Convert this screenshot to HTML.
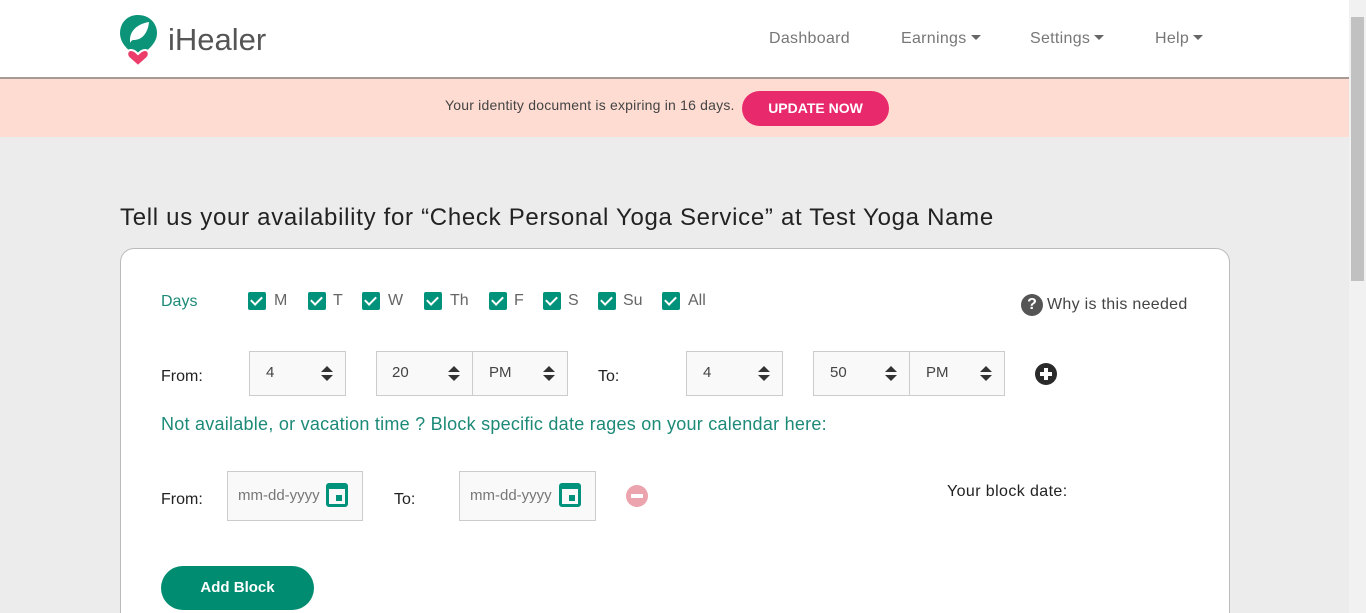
<!DOCTYPE html>
<html style="width:1366px;height:613px;overflow:hidden"><head><meta charset="utf-8"><style>
*{box-sizing:border-box;margin:0;padding:0}
body{width:1366px;height:613px;overflow:hidden;position:relative;font-family:"Liberation Sans",sans-serif;background:#ececec;color:#333}
.a{position:absolute}
.hdr{left:0;top:0;width:1349px;height:79px;background:#fff;border-bottom:2px solid #a59a96;box-shadow:0 1px 2px rgba(0,0,0,.2)}
.nav{top:30px;font-size:16px;color:#777;letter-spacing:.3px}
.tri{display:inline-block;width:0;height:0;border-left:5px solid transparent;border-right:5px solid transparent;border-top:5px solid #666;vertical-align:3px;margin-left:4px}
.ban{left:0;top:79px;width:1349px;height:58px;background:#fedcd2}
.btn{left:742px;top:91px;width:147px;height:35px;border-radius:18px;background:#e8296b;color:#fff;font-weight:bold;font-size:14px;text-align:center;line-height:35px}
.card{left:120px;top:248px;width:1110px;height:365px;background:#fff;border:1px solid #bbb;border-bottom:none;border-radius:14px 14px 0 0}
.cb{top:292px;width:18px;height:18px;background:#00927a;border-radius:2px}
.cb:after{content:"";position:absolute;left:5px;top:2px;width:5px;height:9px;border:solid #fff;border-width:0 2px 2px 0;transform:rotate(45deg)}
.dl{top:292px;font-size:16px;color:#666}
.sel{top:351px;height:45px;background:#f9f9f9;border:1px solid #ccc;font-size:15px;color:#444;padding:12px 0 0 16px}
.sp{position:absolute;right:12px;top:14px;width:12px;height:16px}
.sp:before{content:"";position:absolute;left:0;top:0;border-left:6px solid transparent;border-right:6px solid transparent;border-bottom:6px solid #333}
.sp:after{content:"";position:absolute;left:0;top:9px;border-left:6px solid transparent;border-right:6px solid transparent;border-top:6px solid #333}
.lb{font-size:16px;color:#222}
.dt{top:471px;height:50px;background:#f9f9f9;border:1px solid #ccc;font-size:15px;color:#777;padding:15px 0 0 10px}
.cal{position:absolute;top:11px;width:22px;height:24px;border:3px solid #00927a;border-top-width:6px;border-radius:3px}
.cal:before{content:"";position:absolute;right:3px;bottom:3px;width:6px;height:6px;background:#00927a}
</style></head><body>
<div class="a hdr"></div>
<svg class="a" style="left:119px;top:14px" width="40" height="52" viewBox="0 0 40 52">
<path d="M19 1C8 1 1 9 1 19c0 9 6 15 12 20l6 5 6-5c6-5 13-11 13-20C38 9 30 1 19 1z" fill="#0b9478"/>
<path d="M11 26c0-9 7-16 19-18-1 11-7 18-15 18-2 0-3 1-4 3z" fill="#fff"/>
<path d="M19 52l-9-8c-3-3-2-8 2-8 3 0 5 2 7 4 2-2 4-4 7-4 4 0 5 5 2 8z" fill="#ec3d6b" stroke="#fff" stroke-width="2"/>
</svg>
<div class="a" style="left:168px;top:22px;font-size:31px;color:#555">iHealer</div>
<div class="a nav" style="left:769px">Dashboard</div>
<div class="a nav" style="left:901px">Earnings<span class="tri"></span></div>
<div class="a nav" style="left:1030px">Settings<span class="tri"></span></div>
<div class="a nav" style="left:1155px">Help<span class="tri"></span></div>
<div class="a ban"></div>
<div class="a" style="left:445px;top:97px;font-size:14px;color:#444;letter-spacing:.2px">Your identity document is expiring in 16 days.</div>
<div class="a btn">UPDATE NOW</div>
<div class="a" style="left:1349px;top:0;width:17px;height:613px;background:#f1f1f1"></div>
<div class="a" style="left:1351px;top:17px;width:13px;height:264px;background:#c1c1c1"></div>
<div class="a" style="left:120px;top:204px;font-size:24px;color:#222;letter-spacing:.7px">Tell us your availability for “Check Personal Yoga Service” at Test Yoga Name</div>
<div class="a card"></div>
<div class="a" style="left:161px;top:293px;font-size:16px;color:#1d8a78">Days</div>
<div class="a cb" style="left:248px"></div><div class="a dl" style="left:274px">M</div>
<div class="a cb" style="left:308px"></div><div class="a dl" style="left:333px">T</div>
<div class="a cb" style="left:362px"></div><div class="a dl" style="left:388px">W</div>
<div class="a cb" style="left:424px"></div><div class="a dl" style="left:450px">Th</div>
<div class="a cb" style="left:489px"></div><div class="a dl" style="left:514px">F</div>
<div class="a cb" style="left:543px"></div><div class="a dl" style="left:568px">S</div>
<div class="a cb" style="left:598px"></div><div class="a dl" style="left:623px">Su</div>
<div class="a cb" style="left:662px"></div><div class="a dl" style="left:688px">All</div>
<div class="a" style="left:1021px;top:294px;width:22px;height:22px;border-radius:50%;background:#555;color:#fff;font-weight:bold;font-size:16px;text-align:center;line-height:22px">?</div>
<div class="a" style="left:1047px;top:296px;font-size:16px;color:#444;letter-spacing:.3px">Why is this needed</div>
<div class="a lb" style="left:161px;top:368px">From:</div>
<div class="a sel" style="left:249px;width:97px">4<span class="sp"></span></div>
<div class="a sel" style="left:376px;width:97px;padding-left:15px">20<span class="sp"></span></div>
<div class="a sel" style="left:472px;width:96px">PM<span class="sp"></span></div>
<div class="a lb" style="left:598px;top:368px">To:</div>
<div class="a sel" style="left:686px;width:97px">4<span class="sp"></span></div>
<div class="a sel" style="left:813px;width:97px;padding-left:16px">50<span class="sp"></span></div>
<div class="a sel" style="left:909px;width:96px">PM<span class="sp"></span></div>
<div class="a" style="left:1035px;top:363px;width:22px;height:22px;border-radius:50%;background:#2a2a2a"><div class="a" style="left:5px;top:9px;width:12px;height:4px;background:#fff"></div><div class="a" style="left:9px;top:5px;width:4px;height:12px;background:#fff"></div></div>
<div class="a" style="left:161px;top:414px;font-size:18px;color:#1d8a78;letter-spacing:.25px">Not available, or vacation time ? Block specific date rages on your calendar here:</div>
<div class="a lb" style="left:161px;top:491px">From:</div>
<div class="a dt" style="left:227px;width:136px">mm-dd-yyyy<span class="cal" style="left:98px"></span></div>
<div class="a lb" style="left:394px;top:491px">To:</div>
<div class="a dt" style="left:459px;width:137px">mm-dd-yyyy<span class="cal" style="left:99px"></span></div>
<div class="a" style="left:626px;top:485px;width:22px;height:22px;border-radius:50%;background:#eba3ad"><div class="a" style="left:5px;top:9px;width:12px;height:4px;background:#fff"></div></div>
<div class="a" style="left:947px;top:483px;font-size:16px;color:#222;letter-spacing:.4px">Your block date:</div>
<div class="a" style="left:161px;top:566px;width:153px;height:44px;border-radius:22px;background:#008c70;color:#fff;font-weight:bold;font-size:15px;text-align:center;line-height:44px">Add Block</div>
</body></html>
